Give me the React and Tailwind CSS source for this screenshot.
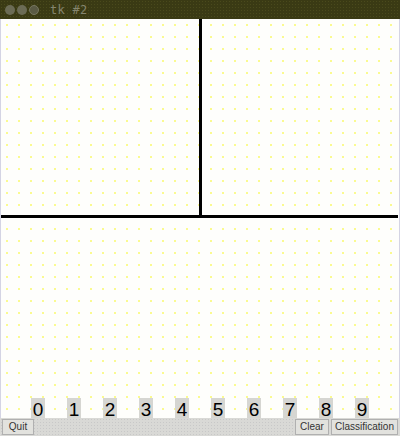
import React from "react";

const digits = ["0", "1", "2", "3", "4", "5", "6", "7", "8", "9"];

export default function App() {
  return (
    <div className="w-[400px] h-[436px] flex flex-col overflow-hidden bg-white" style={{ fontFamily: "'Liberation Sans', Arial, sans-serif" }}>
      {/* title bar */}
      <div className="h-[19px] flex items-center bg-[#3a3a14] bg-[radial-gradient(#4a4a1c_1px,transparent_1px)] bg-[length:3px_3px] px-[5px] gap-[2px]">
        <span className="w-[10px] h-[10px] rounded-full bg-[#6b6b55]" />
        <span className="w-[10px] h-[10px] rounded-full bg-[#6b6b55]" />
        <span className="w-[10px] h-[10px] rounded-full bg-[#5a5a44] border border-[#77775f]" />
        <span className="ml-[9px] text-[12px] text-[#85856f] tracking-wide" style={{ fontFamily: "'DejaVu Sans Mono', monospace" }}>tk #2</span>
      </div>

      {/* canvas */}
      <div className="flex-1 flex flex-col bg-[#fefefc] bg-[radial-gradient(#fafa90_1px,transparent_1px)] bg-[length:12px_12px] border-l border-r border-[#d4d4e4]">
        <div className="h-[196px] flex">
          <div className="w-[198px]" />
          <div className="w-[3px] bg-black" />
        </div>
        <div className="h-[3px] bg-black mr-[1px]" />
        <div className="flex-1" />
        <div className="h-[20px] flex pl-[19px]">
          {digits.map(d => (
            <div key={d} className="w-[36px] flex justify-center">
              <span className="bg-[#d6d6d2] px-[2px] h-[20px] leading-[23px] text-[19px] text-black">{d}</span>
            </div>
          ))}
        </div>
      </div>

      {/* buttons */}
      <div className="h-[18px] flex items-center bg-[#d9d9d6] bg-[radial-gradient(#c8c8c8_1px,transparent_1px)] bg-[length:3px_3px] px-[2px] text-[10px] text-[#333]">
        <button className="h-[16px] w-[32px] border border-[#b0b0b0] bg-[#e2e2de] leading-none">Quit</button>
        <div className="flex-1" />
        <button className="h-[16px] w-[34px] border border-[#b0b0b0] bg-[#e2e2de] leading-none">Clear</button>
        <button className="h-[16px] w-[67px] ml-[2px] border border-[#b0b0b0] bg-[#e2e2de] leading-none">Classification</button>
      </div>
    </div>
  );
}
